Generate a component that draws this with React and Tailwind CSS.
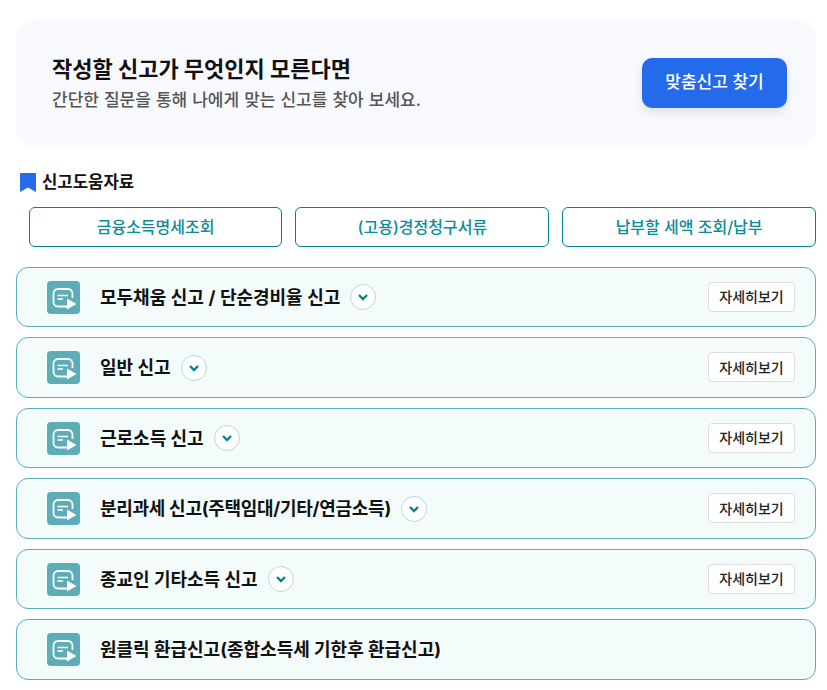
const Row = ({ title, titleClass = "", more = true, chevron = true }) => (
  <div className="flex h-[60.4px] items-center rounded-[12px] border border-[#5cadb8] bg-[#f3fbfb] pl-[30px] pr-[20px]">
    <div className="h-[33px] w-[33px] shrink-0 rounded-[4px] bg-[#5cadb8]">
      <svg width="33" height="33" viewBox="0 0 33 33" fill="none">
        <path d="M20 25.5H11A4.5 4.5 0 0 1 6.5 21V12.5A4.5 4.5 0 0 1 11 8H21A4.5 4.5 0 0 1 25.5 12.5V17" stroke="#fff" strokeWidth="1.8" />
        <path d="M10.5 14.5H21M10.5 18H16" stroke="#fff" strokeWidth="1.6" />
        <path d="M20 17.5L29.5 23L20 28.5Z" fill="#fff" />
      </svg>
    </div>
    <span className={"ml-[20px] text-[18px] font-bold text-[#111] " + titleClass}>{title}</span>
    {chevron && (
      <span className="ml-[10px] flex h-[26px] w-[26px] items-center justify-center rounded-full border border-[#b9d8dc] bg-white">
        <svg width="14" height="14" viewBox="0 0 14 14" fill="none">
          <path d="M3 5L7 9L11 5" stroke="#00838f" strokeWidth="2.3" />
        </svg>
      </span>
    )}
    {more && (
      <button className="ml-auto -mt-[0.4px] flex h-[30px] w-[87px] items-center justify-center rounded-[4px] border border-[#ddd] bg-white text-[14px] font-medium text-[#222]">
        자세히보기
      </button>
    )}
  </div>
);

const LinkBtn = ({ children }) => (
  <button className="flex h-[40px] items-center justify-center rounded-[6px] border border-[#00838f] bg-white text-[16px] font-medium text-[#0a8c98]">
    {children}
  </button>
);

export default function App() {
  return (
    <div className="min-h-[690px] bg-white px-[16px] pt-[20px] pr-[11px] font-['Inter','Noto_Sans_CJK_KR',sans-serif]">
      <div className="flex h-[127px] items-center justify-between rounded-[20px] bg-[#f7f9fe] pl-[36px] pr-[29px]">
        <div className="-mt-[1px]">
          <h2 className="text-[22px] font-bold leading-[30px] text-[#111]">작성할 신고가 무엇인지 모른다면</h2>
          <p className="mt-[4px] text-[17px] font-medium leading-[24px] text-[#555] [word-spacing:0.5px]">간단한 질문을 통해 나에게 맞는 신고를 찾아 보세요.</p>
        </div>
        <button className="-mt-[2px] h-[50px] w-[145px] rounded-[10px] bg-[#246beb] text-[17px] font-medium text-white shadow-[0_4px_10px_rgba(0,0,0,0.1)]">
          맞춤신고 찾기
        </button>
      </div>
      <div className="mt-[25px] flex h-[20px] items-center pl-[4px]">
        <svg width="16" height="19" viewBox="0 0 16 19">
          <path d="M1 0H15A1 1 0 0 1 16 1V19L8 14.5L0 19V1A1 1 0 0 1 1 0Z" fill="#246beb" />
        </svg>
        <span className="ml-[6px] mt-[1px] text-[16.7px] font-bold text-[#111]">신고도움자료</span>
      </div>
      <div className="mt-[15px] grid grid-cols-3 gap-[13px] pl-[12.7px]">
        <LinkBtn>금융소득명세조회</LinkBtn>
        <LinkBtn>(고용)경정청구서류</LinkBtn>
        <LinkBtn>납부할 세액 조회/납부</LinkBtn>
      </div>
      <div className="mt-[19.95px] flex flex-col gap-[10.1px]">
        <Row title="모두채움 신고 / 단순경비율 신고" titleClass="[word-spacing:0.25px]" />
        <Row title="일반 신고" />
        <Row title="근로소득 신고" />
        <Row title="분리과세 신고(주택임대/기타/연금소득)" titleClass="tracking-[-0.28px]" />
        <Row title="종교인 기타소득 신고" />
        <Row title="원클릭 환급신고(종합소득세 기한후 환급신고)" more={false} chevron={false} />
      </div>
    </div>
  );
}
